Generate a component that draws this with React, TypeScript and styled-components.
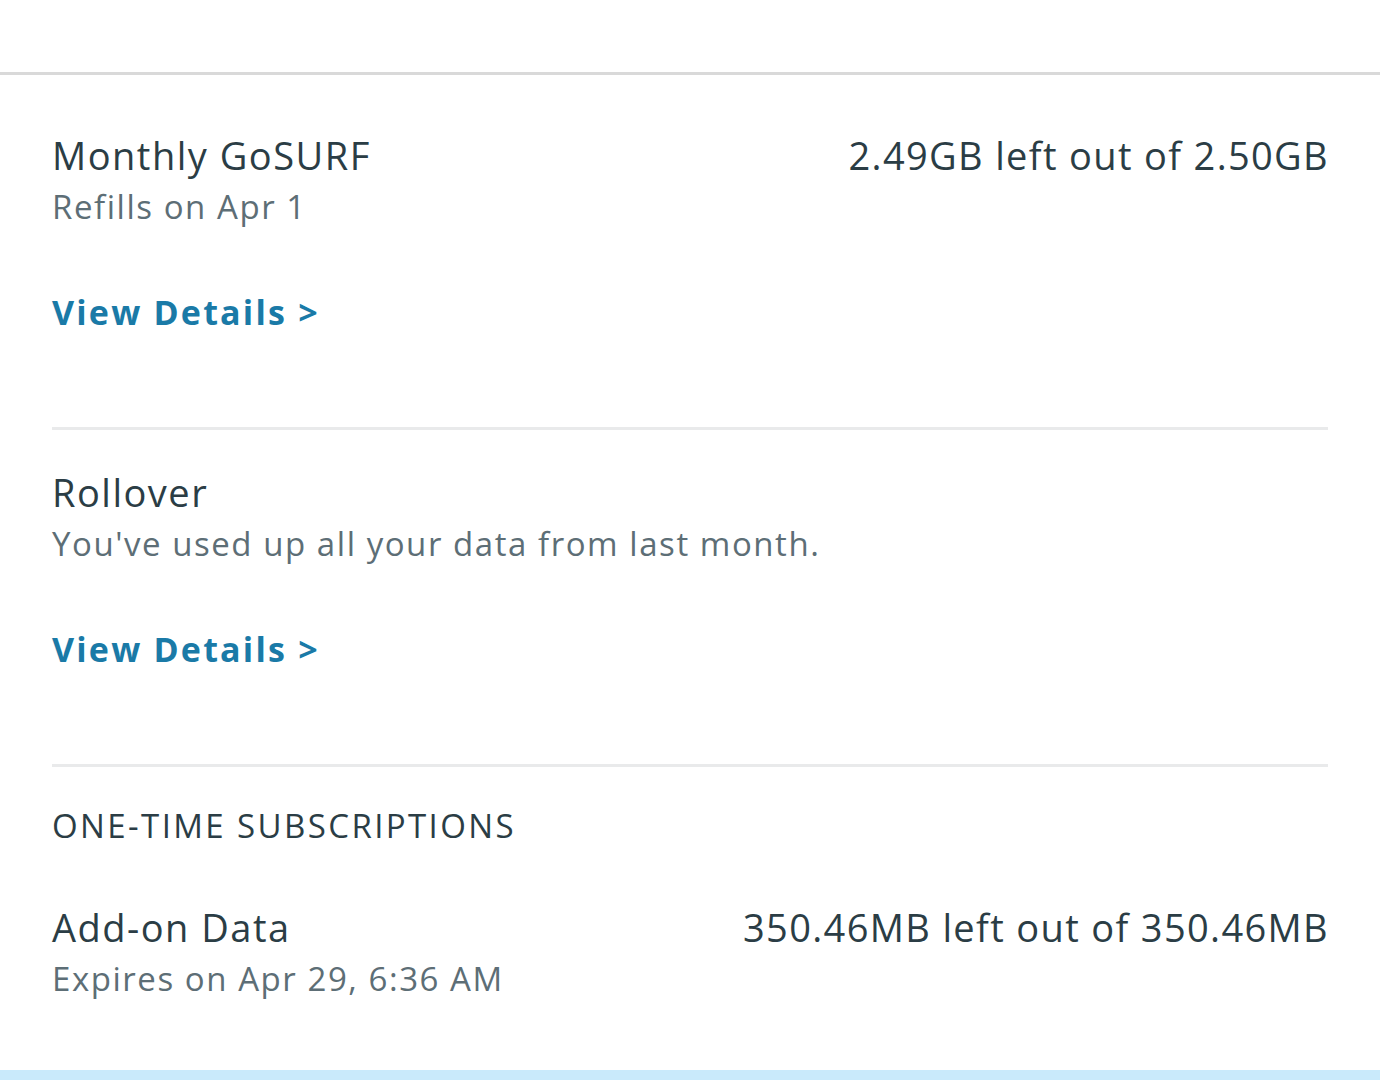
import React from "react";
import styled, { createGlobalStyle } from "styled-components";

const Global = createGlobalStyle`
  html, body { margin: 0; padding: 0; background: #ffffff; }
  body { font-family: "Open Sans", "Noto Sans", sans-serif; -webkit-font-smoothing: antialiased; }
`;

const Page = styled.div`
  width: 1380px;
  height: 1080px;
  display: flex;
  flex-direction: column;
  background: #ffffff;
  overflow: hidden;
`;

const TopBar = styled.div`
  height: 72px;
  flex: none;
  border-bottom: 3px solid #d9d9d9;
`;

const Content = styled.div`
  flex: 1;
  display: flex;
  flex-direction: column;
  padding: 0 52px;
`;

const Section = styled.section<{ $top: number; $bottom: number }>`
  display: flex;
  flex-direction: column;
  padding-top: ${(p) => p.$top}px;
  padding-bottom: ${(p) => p.$bottom}px;
`;

const Divider = styled.div`
  height: 3px;
  background: #e9eaeb;
  flex: none;
`;

const Row = styled.div<{ $gap?: number }>`
  display: flex;
  justify-content: space-between;
  align-items: flex-start;
  margin-top: ${(p) => p.$gap ?? 0}px;
`;

const Title = styled.div`
  font-size: 38px;
  line-height: 50px;
  color: #2b3d45;
  font-weight: 400;
  letter-spacing: 1.5px;
`;

const Amount = styled(Title)`
  letter-spacing: 1.35px;
  margin-right: -1px;
`;

const Sub = styled.div`
  font-size: 33px;
  line-height: 44px;
  color: #5d6e76;
  margin-top: 5px;
  letter-spacing: 1.55px;
`;

const Link = styled.a<{ $gap: number }>`
  font-size: 34px;
  line-height: 44px;
  font-weight: 700;
  color: #1a7aa7;
  text-decoration: none;
  margin-top: ${(p) => p.$gap}px;
  align-self: flex-start;
  letter-spacing: 2.2px;
`;

const Heading = styled.div`
  font-size: 33px;
  line-height: 44px;
  color: #2b3d45;
  letter-spacing: 2.4px;
`;

const BottomBand = styled.div`
  height: 10px;
  flex: none;
  background: #c9eafb;
`;

export default function App() {
  return (
    <Page>
      <Global />
      <TopBar />
      <Content>
        <Section $top={55} $bottom={93}>
          <Row>
            <Title>Monthly GoSURF</Title>
            <Amount>2.49GB left out of 2.50GB</Amount>
          </Row>
          <Sub>Refills on Apr 1</Sub>
          <Link href="#" $gap={61}>View Details &gt;</Link>
        </Section>
        <Divider />
        <Section $top={37} $bottom={93}>
          <Title>Rollover</Title>
          <Sub>You've used up all your data from last month.</Sub>
          <Link href="#" $gap={61}>View Details &gt;</Link>
        </Section>
        <Divider />
        <Section $top={37} $bottom={0}>
          <Heading>ONE-TIME SUBSCRIPTIONS</Heading>
          <Row $gap={54}>
            <Title>Add-on Data</Title>
            <Amount>350.46MB left out of 350.46MB</Amount>
          </Row>
          <Sub>Expires on Apr 29, 6:36 AM</Sub>
        </Section>
      </Content>
      <BottomBand />
    </Page>
  );
}
